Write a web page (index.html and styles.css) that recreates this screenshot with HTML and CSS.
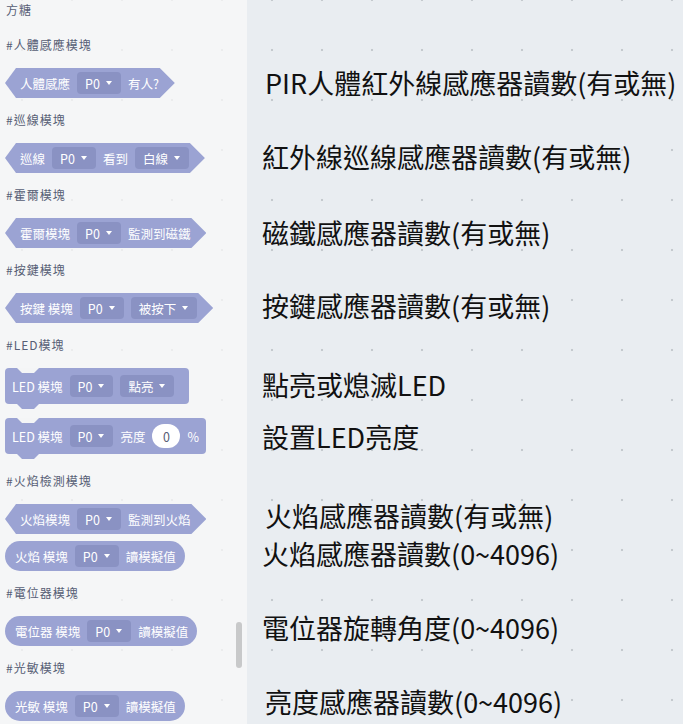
FILE: index.html
```html
<!DOCTYPE html>
<html lang="zh-Hant">
<head>
<meta charset="utf-8">
<title>方糖</title>
<link rel="stylesheet" href="styles.css">
</head>
<body>
<div class="flyout">
  <div class="title">方糖</div>

  <div class="cat first">#人體感應模塊</div>
  <div class="blk hex"><span>人體感應</span><span class="dd">P0<i></i></span><span>有人?</span></div>

  <div class="cat">#巡線模塊</div>
  <div class="blk hex"><span>巡線</span><span class="dd">P0<i></i></span><span>看到</span><span class="dd">白線<i></i></span></div>

  <div class="cat">#霍爾模塊</div>
  <div class="blk hex"><span>霍爾模塊</span><span class="dd">P0<i></i></span><span>監測到磁鐵</span></div>

  <div class="cat">#按鍵模塊</div>
  <div class="blk hex"><span>按鍵 模塊</span><span class="dd">P0<i></i></span><span class="dd">被按下<i></i></span></div>

  <div class="cat">#LED模塊</div>
  <div class="blk stmt"><span>LED 模塊</span><span class="dd">P0<i></i></span><span class="dd last">點亮<i></i></span></div>
  <div class="blk stmt"><span>LED 模塊</span><span class="dd">P0<i></i></span><span>亮度</span><span class="num">0</span><span>%</span></div>

  <div class="cat">#火焰檢測模塊</div>
  <div class="blk hex"><span>火焰模塊</span><span class="dd">P0<i></i></span><span>監測到火焰</span></div>
  <div class="blk pill"><span>火焰 模塊</span><span class="dd">P0<i></i></span><span>讀模擬值</span></div>

  <div class="cat">#電位器模塊</div>
  <div class="blk pill"><span>電位器 模塊</span><span class="dd">P0<i></i></span><span>讀模擬值</span></div>

  <div class="cat">#光敏模塊</div>
  <div class="blk pill"><span>光敏 模塊</span><span class="dd">P0<i></i></span><span>讀模擬值</span></div>

  <div class="scrollbar"></div>
</div>

<div class="workspace">
  <div class="note n1">PIR人體紅外線感應器讀數(有或無)</div>
  <div class="note n2">紅外線巡線感應器讀數(有或無)</div>
  <div class="note n3">磁鐵感應器讀數(有或無)</div>
  <div class="note n4">按鍵感應器讀數(有或無)</div>
  <div class="note n5">點亮或熄滅LED</div>
  <div class="note n6">設置LED亮度</div>
  <div class="note n7">火焰感應器讀數(有或無)</div>
  <div class="note n8">火焰感應器讀數(0~4096)</div>
  <div class="note n9">電位器旋轉角度(0~4096)</div>
  <div class="note n10">亮度感應器讀數(0~4096)</div>
</div>
</body>
</html>
```

FILE: styles.css
```css
html, body {
  margin: 0;
  padding: 0;
}

body {
  width: 683px;
  height: 724px;
  overflow: hidden;
  display: flex;
  font-family: "Noto Sans CJK TC", "Noto Sans", sans-serif;
  background-color: #e9edf1;
  background-image: radial-gradient(circle at 25px 25px, #c4c9ce 0, #c4c9ce 1px, rgba(196,201,206,0) 1.6px);
  background-size: 50px 50px;
  background-position: -3px -25px;
}

/* ---------- flyout ---------- */
.flyout {
  position: relative;
  width: 247px;
  height: 724px;
  flex: none;
  box-sizing: border-box;
  padding: 2px 0 0 5px;
  background: rgba(250, 250, 250, 0.72);
  display: flex;
  flex-direction: column;
  align-items: flex-start;
  overflow: hidden;
}

.title,
.cat {
  margin-left: 1px;
  font-size: 12px;
  line-height: 16px;
  letter-spacing: 1px;
  color: #575e75;
}

.cat.first { margin-top: 19px; }
.cat + .blk { margin-top: 15px; }
.blk + .cat { margin-top: 14px; }
.blk + .blk { margin-top: 7px; }
.stmt + .stmt { margin-top: 14px; }
.stmt + .cat { margin-top: 19px; }

.blk {
  position: relative;
  display: flex;
  align-items: center;
  gap: 7px;
  height: 30px;
  box-sizing: border-box;
  background: #9ba3d3;
  color: #fff;
  font-size: 12.5px;
  white-space: nowrap;
}

.hex {
  padding: 0 16px 0 15px;
  clip-path: polygon(0 50%, 11px 0, calc(100% - 15px) 0, 100% 50%, calc(100% - 15px) 100%, 11px 100%);
}

.pill {
  padding: 0 9px 0 10px;
  border-radius: 15px;
}

.stmt {
  height: 36px;
  padding: 0 7px;
  border-radius: 4px;
}

.stmt::before {
  content: "";
  position: absolute;
  top: 0;
  left: 12px;
  width: 22px;
  height: 5px;
  background: #f4f5f6;
  clip-path: polygon(0 0, 100% 0, calc(100% - 5px) 100%, 5px 100%);
}

.stmt::after {
  content: "";
  position: absolute;
  top: 100%;
  left: 12px;
  width: 22px;
  height: 5px;
  background: #9ba3d3;
  border-radius: 0 0 3px 3px;
  clip-path: polygon(0 0, 100% 0, calc(100% - 5px) 100%, 5px 100%);
}

.dd {
  display: flex;
  align-items: center;
  gap: 6px;
  height: 22px;
  padding: 0 9px 0 8px;
  border-radius: 4px;
  background: #8a92c3;
}

.dd i {
  width: 0;
  height: 0;
  border-left: 3.5px solid transparent;
  border-right: 3.5px solid transparent;
  border-top: 4px solid #fff;
}

.dd.last { margin-right: 8px; }

.num {
  width: 28px;
  height: 24px;
  border-radius: 12px;
  background: #fff;
  color: #575e75;
  display: flex;
  align-items: center;
  justify-content: center;
}

.scrollbar {
  position: absolute;
  left: 236px;
  top: 622px;
  width: 6px;
  height: 46px;
  border-radius: 3px;
  background: #c8c9ca;
}

/* ---------- workspace ---------- */
.workspace {
  position: relative;
  flex: 1;
  height: 724px;
}

.note {
  position: absolute;
  left: 15px;
  font-size: 27px;
  line-height: 36px;
  color: #111;
  white-space: nowrap;
}

.n1 { left: 18px; top: 65px; }
.n2 { top: 139px; }
.n3 { top: 215px; }
.n4 { top: 288px; }
.n5 { top: 367px; }
.n6 { top: 419px; }
.n7 { left: 18px; top: 498px; }
.n8 { top: 536px; }
.n9 { top: 610px; }
.n10 { left: 18px; top: 684px; }
```
